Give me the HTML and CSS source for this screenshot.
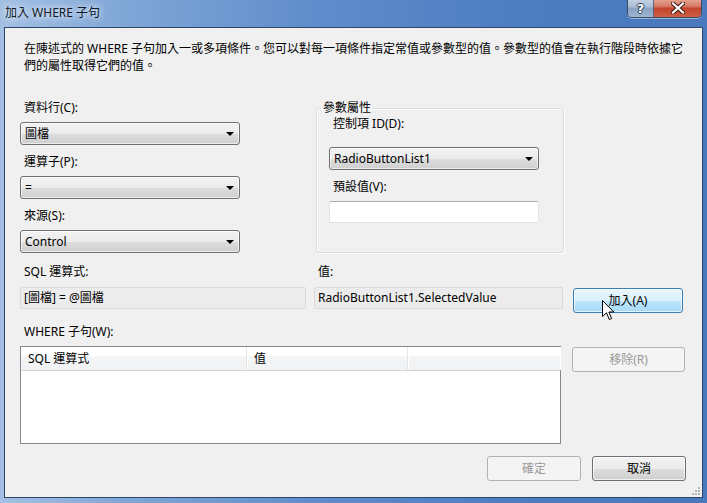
FILE: index.html
```html
<!DOCTYPE html>
<html lang="zh-Hant">
<head>
<meta charset="utf-8">
<title>加入 WHERE 子句</title>
<link rel="stylesheet" href="styles.css">
</head>
<body>
<div class="window">
  <div class="titlebar">
    <span class="title">加入 WHERE 子句</span>
    <div class="caption-btns">
      <div class="cap cap-help"><span>?</span></div>
      <div class="cap cap-close">
        <svg width="14" height="12" viewBox="0 0 14 12"><path d="M2 1.5 L12 10.5 M12 1.5 L2 10.5" stroke="#3a1a14" stroke-width="4.2" stroke-linecap="square"/><path d="M2 1.5 L12 10.5 M12 1.5 L2 10.5" stroke="#ffffff" stroke-width="2.2" stroke-linecap="square"/></svg>
      </div>
    </div>
  </div>
  <div class="client">
    <p class="desc">在陳述式的 WHERE 子句加入一或多項條件。您可以對每一項條件指定常值或參數型的值。參數型的值會在執行階段時依據它<br>們的屬性取得它們的值。</p>

    <div class="top-section">
      <div class="left-col">
        <div class="field">
          <div class="lbl">資料行(C):</div>
          <div class="combo"><span>圖檔</span><i class="arrow"></i></div>
        </div>
        <div class="field">
          <div class="lbl">運算子(P):</div>
          <div class="combo"><span>=</span><i class="arrow"></i></div>
        </div>
        <div class="field">
          <div class="lbl">來源(S):</div>
          <div class="combo"><span>Control</span><i class="arrow"></i></div>
        </div>
      </div>
      <fieldset class="group">
        <legend>參數屬性</legend>
        <div class="lbl">控制項 ID(D):</div>
        <div class="combo group-combo"><span>RadioButtonList1</span><i class="arrow"></i></div>
        <div class="lbl lbl-default">預設值(V):</div>
        <div class="textbox"></div>
      </fieldset>
    </div>

    <div class="expr-grid">
      <div class="lbl">SQL 運算式:</div>
      <div class="lbl">值:</div>
      <div></div>
      <div class="ro">[圖檔] = @圖檔</div>
      <div class="ro">RadioButtonList1.SelectedValue</div>
      <div class="btn btn-hover btn-add">加入(A)
        <svg class="cursor" width="13" height="21" viewBox="0 0 13 21"><path d="M0.5 0.5 L0.5 16.5 L4.5 12.8 L7.3 19.5 L9.6 18.5 L6.9 12 L11.8 12 Z" fill="#ffffff" stroke="#000000" stroke-width="1" stroke-linejoin="miter"/></svg>
      </div>
    </div>

    <div class="lbl where-lbl">WHERE 子句(W):</div>
    <div class="list-row">
      <div class="listview">
        <div class="lv-header">
          <div class="col c1">SQL 運算式</div>
          <div class="col c2">值</div>
          <div class="col c3"></div>
        </div>
      </div>
      <div class="btn btn-disabled btn-remove">移除(R)</div>
    </div>

    <div class="footer">
      <div class="btn btn-disabled btn-ok">確定</div>
      <div class="btn btn-cancel">取消</div>
    </div>

    <svg class="grip" width="10" height="10" viewBox="0 0 10 10">
      <g fill="#b5b5b5">
        <rect x="7" y="1" width="2" height="2"/>
        <rect x="4" y="4" width="2" height="2"/><rect x="7" y="4" width="2" height="2"/>
        <rect x="1" y="7" width="2" height="2"/><rect x="4" y="7" width="2" height="2"/><rect x="7" y="7" width="2" height="2"/>
      </g>
    </svg>
  </div>
</div>
</body>
</html>
```
FILE: styles.css
```css
* { box-sizing: border-box; }

html, body {
  margin: 0;
  padding: 0;
  background: #3f6fb5;
}

body {
  font-family: "Noto Sans", "Noto Sans CJK TC", sans-serif;
  font-size: 12px;
  color: #000;
}

.window {
  width: 707px;
  height: 503px;
  display: flex;
  flex-direction: column;
  padding: 0 4px 5px 4px;
  background:
    linear-gradient(to right, #a3c0e4 0%, #7fa6d6 18%, #5f8ccb 45%, #4c7cc1 75%, #4a79bd 100%);
}

.titlebar {
  height: 27px;
  flex: 0 0 27px;
  display: flex;
  align-items: flex-start;
  justify-content: space-between;
  margin: 0 -4px;
  padding: 0 5px 0 5px;
}

.title {
  margin-top: 5px;
  line-height: 16px;
  color: #101a2a;
  text-shadow: 0 0 6px rgba(255,255,255,0.9), 0 0 10px rgba(255,255,255,0.7);
}

.caption-btns {
  display: flex;
  height: 19px;
  margin-top: -1px;
  border: 1px solid #3b4c63;
  border-top: none;
  border-radius: 0 0 5px 5px;
  overflow: hidden;
  box-shadow: 0 1px 0 rgba(255,255,255,0.45);
}

.cap {
  display: flex;
  align-items: center;
  justify-content: center;
}

.cap-help {
  width: 26px;
  background: linear-gradient(to bottom, #c5d3e4 0%, #aabdd5 45%, #8aa3c4 50%, #9fb4cf 100%);
  border-right: 1px solid #5a6a80;
}

.cap-help span {
  font-family: "DejaVu Sans", sans-serif;
  font-weight: bold;
  font-size: 13px;
  line-height: 13px;
  color: #fff;
  text-shadow: -1px 0 #2d3c52, 1px 0 #2d3c52, 0 -1px #2d3c52, 0 1px #2d3c52;
}

.cap-close {
  width: 47px;
  background: linear-gradient(to bottom, #e8a493 0%, #d67b68 40%, #c2442c 52%, #cf5f45 100%);
}

.client {
  position: relative;
  flex: 1;
  background: #f0f0f0;
  border: 1px solid #2e4667;
  padding: 12px 16px 0 15px;
}

.desc {
  margin: 0;
  padding-left: 4px;
  line-height: 17px;
  font-size: 12px;
}

.lbl {
  line-height: 16px;
  padding-left: 4px;
  white-space: nowrap;
}

/* top section */
.top-section {
  display: flex;
  align-items: flex-start;
  margin-top: 26px;
}

.left-col {
  width: 220px;
  display: flex;
  flex-direction: column;
  gap: 9px;
}

.field .lbl { margin-bottom: 6px; }

.combo {
  position: relative;
  height: 23px;
  border: 1px solid #707070;
  border-radius: 3px;
  background: linear-gradient(to bottom, #f3f3f3 0%, #ebebeb 50%, #dddddd 51%, #cfcfcf 100%);
  display: flex;
  align-items: center;
  padding-left: 4px;
  line-height: 16px;
  box-shadow: inset 0 0 0 1px rgba(255,255,255,0.6);
}

.combo span { flex: 1; }

.arrow {
  width: 0;
  height: 0;
  margin-right: 5px;
  border-left: 4px solid transparent;
  border-right: 4px solid transparent;
  border-top: 4px solid #000;
}

.group {
  margin: 0 0 0 76px;
  width: 248px;
  padding: 0 0 29px 12px;
  border: 1px solid #d5dfe5;
  border-radius: 3px;
  box-shadow: inset 1px 1px 0 #ffffff, 1px 1px 0 #ffffff;
}

.group legend {
  margin-left: -8px;
  padding: 0 2px;
  line-height: 16px;
}

.group-combo {
  width: 210px;
  margin-top: 15px;
}

.lbl-default { margin-top: 9px; }

.textbox {
  width: 210px;
  height: 22px;
  margin-top: 6px;
  background: #fff;
  border: 1px solid #dbdfe6;
  border-top-color: #abadb3;
  border-left-color: #e2e3ea;
  border-right-color: #e2e3ea;
  border-radius: 2px;
}

/* expression row */
.expr-grid {
  display: grid;
  grid-template-columns: 286px 249px 112px;
  column-gap: 8px;
  row-gap: 7px;
  margin-top: 11px;
  align-items: start;
}

.expr-grid > :nth-child(3n) { margin-left: 2px; }

.ro {
  height: 22px;
  border: 1px solid #dadada;
  border-radius: 2px;
  background: #ececec;
  padding-left: 3px;
  line-height: 20px;
  white-space: nowrap;
}

.btn {
  position: relative;
  height: 25px;
  border: 1px solid #707070;
  border-radius: 3px;
  background: linear-gradient(to bottom, #f2f2f2 0%, #ebebeb 50%, #dddddd 51%, #cfcfcf 100%);
  box-shadow: inset 0 0 0 1px rgba(255,255,255,0.7);
  display: flex;
  align-items: center;
  justify-content: center;
  line-height: 16px;
}

.btn-hover {
  border-color: #3c7fb1;
  background: linear-gradient(to bottom, #eaf6fd 0%, #d9f0fc 50%, #bee6fd 51%, #a7d9f5 100%);
}

.btn-disabled {
  border-color: #adb2b5;
  background: #f4f4f4;
  color: #9a9a9a;
  box-shadow: none;
}

.btn-add { margin-top: 1px; }

.cursor {
  position: absolute;
  left: 28px;
  top: 11px;
}

.where-lbl { margin-top: 11px; }

.list-row {
  display: flex;
  align-items: flex-start;
  margin-top: 6px;
}

.listview {
  width: 541px;
  height: 98px;
  background: #fff;
  border: 1px solid #828790;
}

.lv-header {
  display: flex;
  height: 24px;
  background: linear-gradient(to bottom, #ffffff 0%, #ffffff 40%, #f4f5f6 41%, #f1f2f3 100%);
  border-bottom: 1px solid #d5d5d5;
}

.col {
  line-height: 23px;
  padding-left: 7px;
  border-right: 1px solid #e3e4e6;
  box-shadow: 1px 0 0 #ffffff;
}

.c1 { width: 226px; }
.c2 { width: 161px; }
.c3 { flex: 1; border-right: none; }

.btn-remove {
  width: 113px;
  margin-left: 11px;
  margin-top: 1px;
}

.footer {
  display: flex;
  justify-content: flex-end;
  gap: 11px;
  margin-top: 12px;
}

.btn-ok, .btn-cancel { width: 94px; }

.grip {
  position: absolute;
  right: 1px;
  bottom: 1px;
}
```
